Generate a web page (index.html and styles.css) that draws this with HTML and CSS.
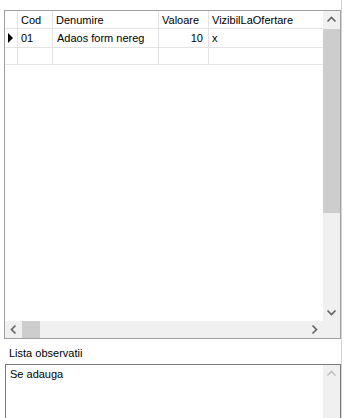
FILE: index.html
```html
<!DOCTYPE html>
<html lang="en">
<head>
  <meta charset="UTF-8" />
  <title>Observatii</title>
  <link rel="stylesheet" href="styles.css">
</head>
<body>
  <div class="panel">

    <!-- Grid -->
    <div class="grid">
      <div class="grid-main">
        <div class="row head">
          <div class="cell"></div>
          <div class="cell">Cod</div>
          <div class="cell">Denumire</div>
          <div class="cell">Valoare</div>
          <div class="cell last">VizibilLaOfertare</div>
        </div>
        <div class="row data">
          <div class="cell">
            <svg class="current" width="5" height="10" viewBox="0 0 5 10"><polygon points="0,0 5,5 0,10" fill="#000"/></svg>
          </div>
          <div class="cell">01</div>
          <div class="cell">Adaos form nereg</div>
          <div class="cell num">10</div>
          <div class="cell last">x</div>
        </div>
        <div class="row blank">
          <div class="cell"></div>
          <div class="cell"></div>
          <div class="cell"></div>
          <div class="cell"></div>
          <div class="cell last"></div>
        </div>
      </div>

      <div class="vscroll">
        <div class="arrow">
          <svg width="17" height="17" viewBox="0 0 17 17"><polyline points="4.5,10.5 8.5,6.5 12.5,10.5" fill="none" stroke="#606060" stroke-width="1.6"/></svg>
        </div>
        <div class="track"><div class="thumb"></div></div>
        <div class="arrow">
          <svg width="17" height="17" viewBox="0 0 17 17"><polyline points="4.5,6.5 8.5,10.5 12.5,6.5" fill="none" stroke="#606060" stroke-width="1.6"/></svg>
        </div>
      </div>

      <div class="hscroll">
        <div class="arrow">
          <svg width="17" height="17" viewBox="0 0 17 17"><polyline points="10.5,4.5 6.5,8.5 10.5,12.5" fill="none" stroke="#606060" stroke-width="1.6"/></svg>
        </div>
        <div class="track"><div class="thumb"></div></div>
        <div class="arrow">
          <svg width="17" height="17" viewBox="0 0 17 17"><polyline points="6.5,4.5 10.5,8.5 6.5,12.5" fill="none" stroke="#606060" stroke-width="1.6"/></svg>
        </div>
      </div>

      <div class="corner"></div>
    </div>

    <!-- Observatii -->
    <div class="label">Lista observatii</div>
    <div class="memo">
      <div class="memo-text">Se adauga</div>
      <div class="memo-scroll">
        <div class="arrow">
          <svg width="17" height="17" viewBox="0 0 17 17"><polyline points="4.5,10.5 8.5,6.5 12.5,10.5" fill="none" stroke="#c0c0c0" stroke-width="1.6"/></svg>
        </div>
      </div>
    </div>

  </div>
</body>
</html>
```

FILE: styles.css
```css
body {
  margin: 0;
  background: white;
  font-family: 'Liberation Sans', Arial, sans-serif;
  font-size: 11px;
  color: #000;
}

.panel {
  width: 342px;
  height: 418px;
  border-right: 1px solid #d4d4d4;
  padding-top: 10px;
  box-sizing: border-box;
  overflow: hidden;
}

.grid {
  margin-left: 4px;
  width: 337px;
  height: 329px;
  border: 1px solid #a0a0a0;
  box-sizing: border-box;
  display: grid;
  grid-template-columns: 318px 17px;
  grid-template-rows: 310px 17px;
}

.grid-main {
  background: white;
  overflow: hidden;
}

.row {
  display: grid;
  grid-template-columns: 13px 35px 106px 50px 114px;
}

.row.head { height: 18px; }
.row.data { height: 19px; }
.row.blank { height: 17px; }

.cell {
  border-right: 1px solid #e3e3e3;
  border-bottom: 1px solid #e3e3e3;
  box-sizing: border-box;
  padding: 0 3px;
  display: flex;
  align-items: center;
  white-space: nowrap;
  overflow: hidden;
}

.cell.last {
  border-right: none;
}

.row.data .cell:nth-child(3) {
  padding-left: 4px;
}

.cell.num {
  justify-content: flex-end;
  padding-right: 5px;
}

.current {
  display: block;
}

.vscroll {
  background: #f0f0f0;
  display: flex;
  flex-direction: column;
}

.vscroll .track {
  flex: 1;
  padding-top: 1px;
}

.vscroll .thumb {
  height: 184px;
  background: #cdcdcd;
}

.hscroll {
  background: #f0f0f0;
  display: flex;
}

.hscroll .track {
  flex: 1;
}

.hscroll .thumb {
  width: 18px;
  height: 17px;
  background: #cdcdcd;
}

.arrow {
  width: 17px;
  height: 17px;
  flex: none;
}

.arrow svg {
  display: block;
}

.corner {
  background: #f0f0f0;
}

.label {
  padding: 8px 0 4px 9px;
  line-height: 13px;
}

.memo {
  margin-left: 5px;
  width: 336px;
  height: 70px;
  border: 1px solid #7a7a7a;
  box-sizing: border-box;
  display: flex;
}

.memo-text {
  flex: 1;
  padding: 3px 4px;
  line-height: 13px;
}

.memo-scroll {
  width: 17px;
  background: #f0f0f0;
}
```
